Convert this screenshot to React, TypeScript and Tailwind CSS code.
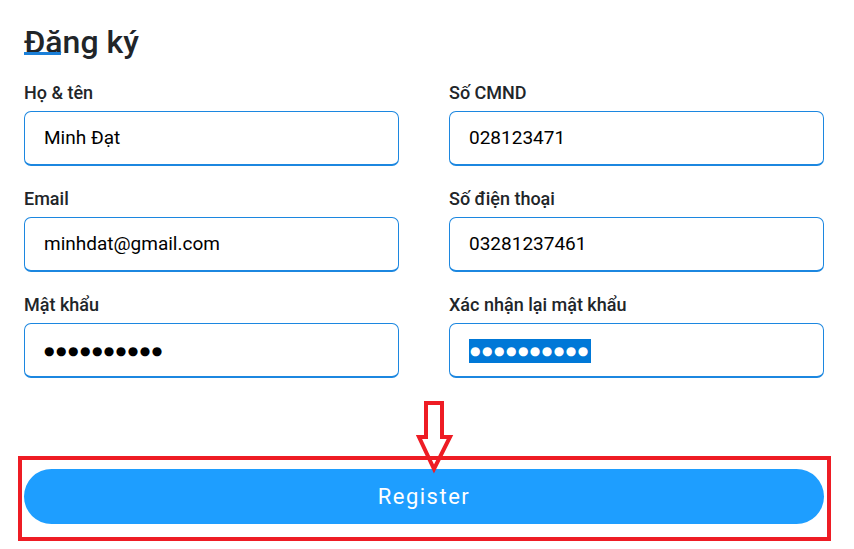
import React from "react";

const font = { fontFamily: "Roboto, 'Noto Sans', sans-serif" };

function Field({ label, children }: { label: string; children: React.ReactNode }) {
  return (
    <div className="flex flex-col">
      <label className="text-[18px] leading-6 font-medium text-[#212529]">{label}</label>
      <div className="mt-[5.5px] h-[55px] rounded-[7px] border border-[#1c87e0] border-b-2 flex items-center pl-[19px] pt-[2px] text-[19px] text-black">
        {children}
      </div>
    </div>
  );
}

function Dots({ selected }: { selected?: boolean }) {
  return (
    <span
      className={
        "inline-flex items-center h-[24px] tracking-[1.5px] text-[12px] " +
        (selected ? "bg-[#0078d7] text-white pl-[1px] pr-[1px]" : "text-black")
      }
      style={{ fontFamily: "'DejaVu Sans', sans-serif" }}
    >
      ●●●●●●●●●●
    </span>
  );
}

export default function App() {
  return (
    <div className="relative w-[854px] h-[549px] bg-white overflow-hidden" style={font}>
      <div className="pl-6 pr-[30px] pt-[22px]">
        <h1 className="relative text-[32px] leading-10 font-medium text-[#212529]">
          Đăng ký
          <span className="absolute left-0 top-[30px] w-[37px] h-[3px] bg-[#1a7fd8]" />
        </h1>
        <div className="mt-[19px] grid grid-cols-[375px_375px] gap-x-[50px] gap-y-[21.5px]">
          <Field label="Họ & tên">Minh Đạt</Field>
          <Field label="Số CMND">028123471</Field>
          <Field label="Email">minhdat@gmail.com</Field>
          <Field label="Số điện thoại">03281237461</Field>
          <Field label="Mật khẩu">
            <Dots />
          </Field>
          <Field label="Xác nhận lại mật khẩu">
            <Dots selected />
          </Field>
        </div>
        <div className="mt-[91px]">
          <button className="w-[800px] h-[55px] rounded-full bg-[#1e9eff] text-white text-[22px] font-normal tracking-[1.5px] flex items-center justify-center">
            Register
          </button>
        </div>
      </div>
      <div className="absolute left-[18px] top-[456px] w-[813px] h-[85px] border-[4.5px] border-[#ee1c24]" />
      <svg className="absolute left-0 top-0" width="854" height="549" viewBox="0 0 854 549">
        <path
          d="M426 403 L442 403 L442 437 L450 437 L434 469 L419 437 L426 437 Z"
          fill="none"
          stroke="#ee1c24"
          strokeWidth="4"
          strokeLinejoin="miter"
        />
      </svg>
    </div>
  );
}
